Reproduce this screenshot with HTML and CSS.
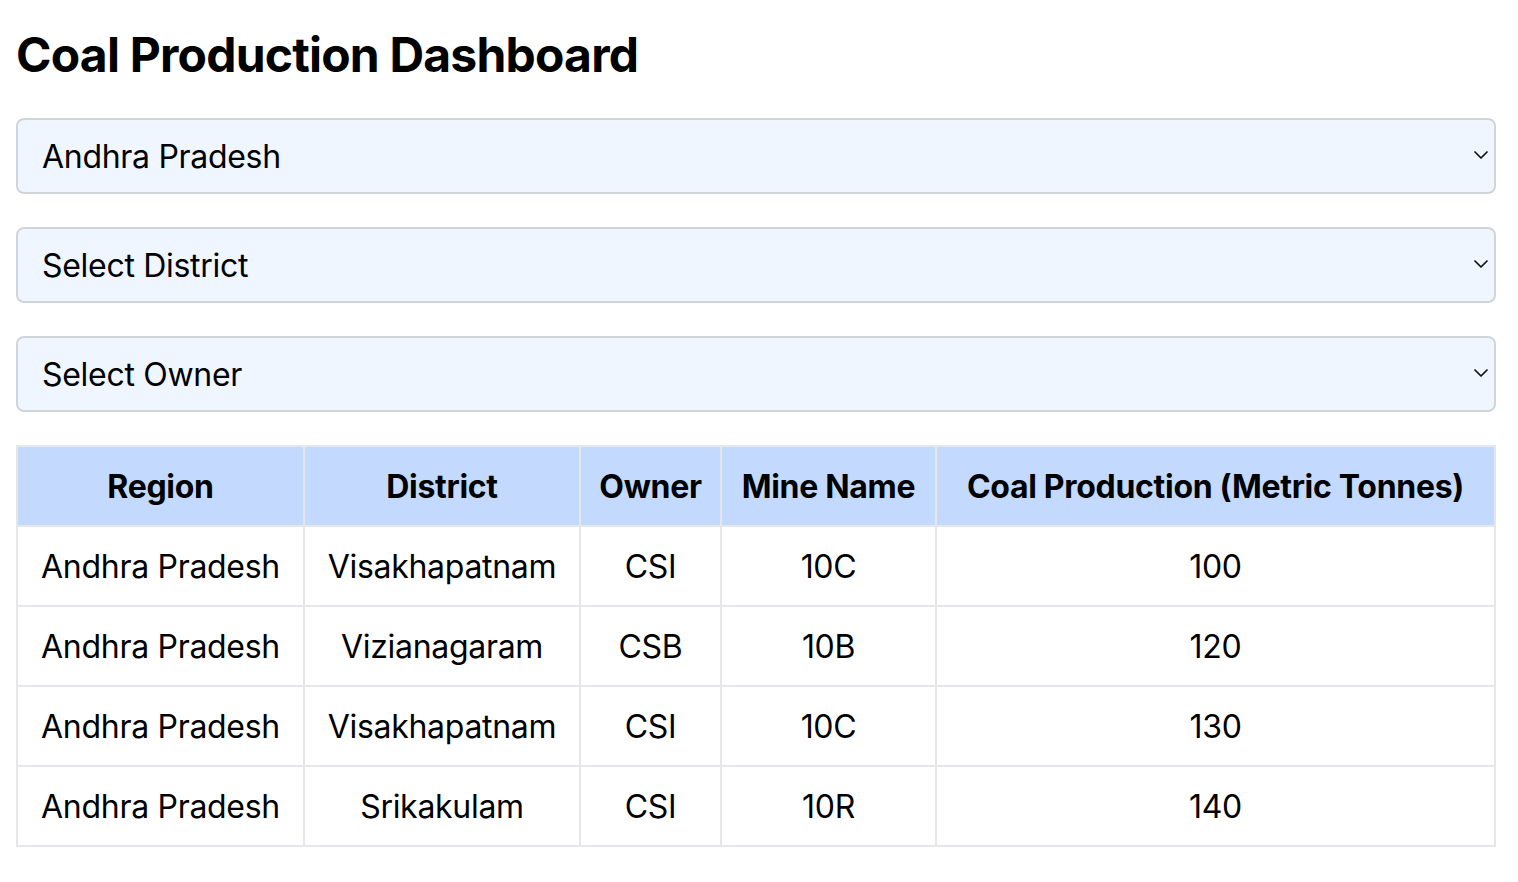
FILE: index.html
```html
<!DOCTYPE html>
<html lang="en">
<head>
<meta charset="utf-8">
<title>Coal Production Dashboard</title>
<link rel="stylesheet" href="styles.css">
</head>
<body>
<main class="page">
  <h1 class="title">Coal Production Dashboard</h1>
  <div class="filters">
    <div class="select"><span>Andhra Pradesh</span><svg class="chev" viewBox="0 0 14 8" width="14" height="8"><path d="M1 1 L7 7 L13 1" fill="none" stroke="#111" stroke-width="1.7" stroke-linecap="round" stroke-linejoin="round"/></svg></div>
    <div class="select"><span>Select District</span><svg class="chev" viewBox="0 0 14 8" width="14" height="8"><path d="M1 1 L7 7 L13 1" fill="none" stroke="#111" stroke-width="1.7" stroke-linecap="round" stroke-linejoin="round"/></svg></div>
    <div class="select"><span>Select Owner</span><svg class="chev" viewBox="0 0 14 8" width="14" height="8"><path d="M1 1 L7 7 L13 1" fill="none" stroke="#111" stroke-width="1.7" stroke-linecap="round" stroke-linejoin="round"/></svg></div>
  </div>
  <table class="data">
    <colgroup>
      <col class="c-region"><col class="c-district"><col class="c-owner"><col class="c-mine"><col class="c-prod">
    </colgroup>
    <thead>
      <tr><th>Region</th><th>District</th><th>Owner</th><th>Mine Name</th><th>Coal Production (Metric Tonnes)</th></tr>
    </thead>
    <tbody>
      <tr><td>Andhra Pradesh</td><td>Visakhapatnam</td><td>CSI</td><td>10C</td><td>100</td></tr>
      <tr><td>Andhra Pradesh</td><td>Vizianagaram</td><td>CSB</td><td>10B</td><td>120</td></tr>
      <tr><td>Andhra Pradesh</td><td>Visakhapatnam</td><td>CSI</td><td>10C</td><td>130</td></tr>
      <tr><td>Andhra Pradesh</td><td>Srikakulam</td><td>CSI</td><td>10R</td><td>140</td></tr>
    </tbody>
  </table>
</main>
</body>
</html>
```
FILE: styles.css
```css
html, body {
  margin: 0;
  padding: 0;
  background: #ffffff;
}
body {
  font-family: Inter, "Noto Sans", sans-serif;
  color: #000;
}
.page {
  padding: 16px 22px 16px 16px;
  display: flex;
  flex-direction: column;
}
.title {
  margin: 0 0 24px;
  font-size: 48px;
  line-height: 78px;
  font-weight: 700;
  letter-spacing: -0.8px;
}
.filters {
  display: flex;
  flex-direction: column;
  gap: 33px;
  margin-bottom: 33px;
}
.select {
  box-sizing: border-box;
  height: 76px;
  border: 2px solid #d1d5db;
  border-radius: 8px;
  background: #eff6ff;
  padding: 0 6px 0 24px;
  display: flex;
  align-items: center;
  justify-content: space-between;
  font-size: 32px;
  letter-spacing: -0.3px;
}
.chev {
  width: 14px;
  height: 8px;
  margin-top: -2px;
}
.data {
  width: 100%;
  table-layout: fixed;
  border-collapse: collapse;
  border: 2px solid #e5e7eb;
}
.c-region { width: 287px; }
.c-district { width: 276px; }
.c-owner { width: 141px; }
.c-mine { width: 215px; }
.c-prod { width: auto; }
.data th, .data td {
  border: 2px solid #e5e7eb;
  padding: 0 12px;
  height: 80px;
  box-sizing: border-box;
  text-align: center;
  font-size: 32px;
  letter-spacing: -0.3px;
  white-space: nowrap;
}
.data th {
  background: #c3dafe;
  font-weight: 700;
}
```
